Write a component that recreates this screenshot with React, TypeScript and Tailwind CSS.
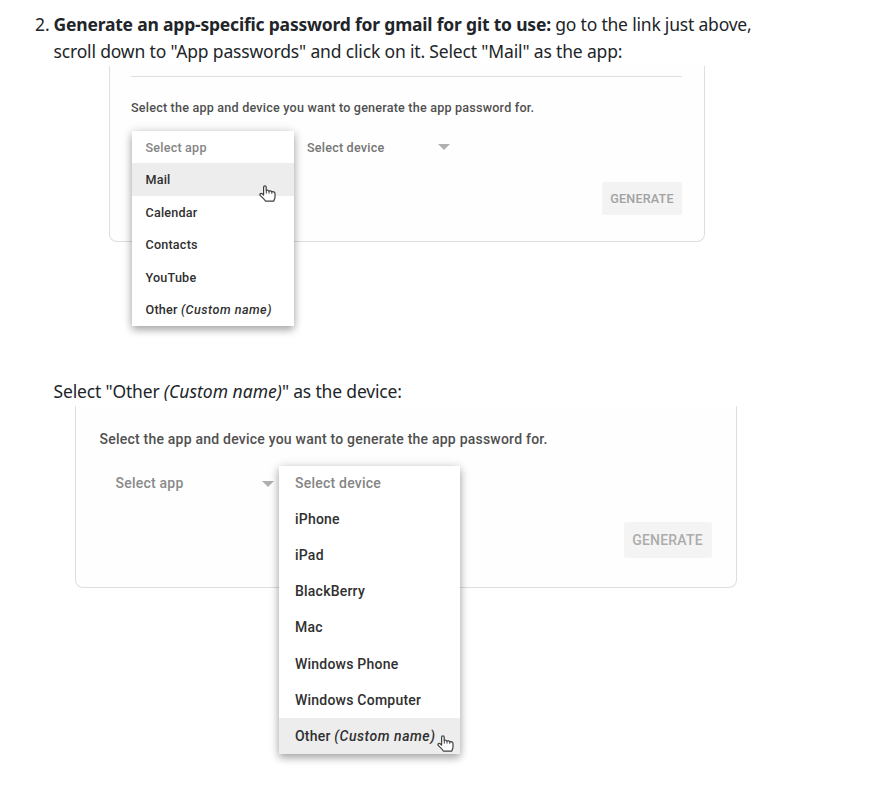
import type { ReactNode } from "react";

function Hand({ className }: { className: string }) {
  return (
    <svg viewBox="0 0 17 17" className={`absolute h-[17px] w-[17px] ${className}`}>
      <path
        d="M4.6 10V2.2C4.6 .4 7.2 .4 7.2 2.2V5.6C8 4.9 9.6 5.1 10 6.2C10.8 5.5 12.4 5.8 12.8 6.9C14 6.3 16 6.8 16 8.6V12C16 13.6 15.2 14.4 14.8 16.2H6.4C6 14.4 3.4 12.8 1.2 10.4C.3 9 1.8 7.8 3.2 8.8Z"
        fill="#fff"
        stroke="#404040"
        strokeWidth="1.2"
        strokeLinejoin="round"
      />
      <path d="M7.3 5.6V8.6M10 6.2V8.6M12.8 6.9V8.8" stroke="#404040" strokeWidth="1" fill="none" />
    </svg>
  );
}

function Arrow() {
  return (
    <svg viewBox="0 0 12 6" className="h-[6px] w-[12px] shrink-0">
      <path d="M0 0H12L6 6Z" fill="#b0b0b0" />
    </svg>
  );
}

function Other({ className }: { className: string }) {
  return (
    <>
      Other <em className={className}>(Custom name)</em>
    </>
  );
}

function Menu({
  title,
  items,
  active,
  className,
  rowClass,
}: {
  title: string;
  items: ReactNode[];
  active: number;
  className: string;
  rowClass: string;
}) {
  return (
    <ul className={`absolute bg-white font-medium text-[#303030] shadow-[0_4px_8px_rgba(0,0,0,0.3),0_0_10px_rgba(0,0,0,0.12)] ${className}`}>
      <li className={`flex items-center whitespace-pre text-[#858585] ${rowClass}`}>{title}</li>
      {items.map((item, i) => (
        <li key={i} className={`flex items-center whitespace-pre ${rowClass} ${i === active ? "bg-[#ededed]" : ""}`}>
          <span>{item}</span>
        </li>
      ))}
    </ul>
  );
}

export default function App() {
  return (
    <main className="h-[785px] w-[891px] overflow-hidden bg-white pt-[11px] font-['Noto_Sans',sans-serif] text-[17.5px] leading-[27px] text-[#212529]">
      <div className="flex">
        <span className="w-[53.5px] shrink-0 pl-[35px]">2.</span>
        <div className="whitespace-nowrap">
          <p className="tracking-[-0.2px]">
            <b>Generate an app-specific password for gmail for git to use:</b> go to the link just above,
          </p>
          <p className="tracking-[-0.163px]">scroll down to "App passwords" and click on it. Select "Mail" as the app:</p>
        </div>
      </div>

      <section className="relative ml-[109px] mt-px h-[176px] w-[596px] rounded-b-[8px] border border-t-0 border-[#dedede] bg-[#fefefe] px-[21px] pt-[10px] font-[Roboto,sans-serif] text-[12.6px] tracking-[0.2px]">
        <div className="h-px w-[551px] bg-[#dedede]" />
        <p className="mt-[17px] font-medium text-[#505050]">Select the app and device you want to generate the app password for.</p>
        <div className="ml-[176px] mt-[12.5px] flex w-[143px] items-center justify-between font-medium text-[#757575]">
          <span>Select device</span>
          <Arrow />
        </div>
        <button className="ml-[471px] mt-[21.5px] flex h-[33px] w-[80px] items-center justify-center rounded-[2px] bg-[#f3f3f3] font-medium text-[#a2a2a2]">GENERATE</button>
        <Menu
          title="Select app"
          active={0}
          items={["Mail", "Calendar", "Contacts", "YouTube", <Other className="tracking-[0.48px]" />]}
          className="left-[21.5px] top-[64.8px] w-[162.4px]"
          rowClass="h-[32.5px] pl-[14px]"
        />
        <Hand className="left-[149px] top-[119px]" />
      </section>

      <p className="ml-[53.5px] mt-[136px] tracking-[-0.17px]">
        Select "Other <em className="tracking-[0.02px]">(Custom name)</em>" as the device:
      </p>

      <section className="relative ml-[75px] mt-px h-[182px] w-[662px] rounded-b-[8px] border border-t-0 border-[#dedede] bg-[#fefefe] px-[23.5px] pt-[20px] font-[Roboto,sans-serif] text-[14px] tracking-[0.22px]">
        <p className="font-medium text-[#505050]">Select the app and device you want to generate the app password for.</p>
        <div className="ml-[16px] mt-[17px] flex w-[158px] items-center justify-between font-medium text-[#8a8a8a]">
          <span>Select app</span>
          <Arrow />
        </div>
        <button className="ml-[524px] mt-[25px] flex h-[36px] w-[88px] items-center justify-center rounded-[3px] bg-[#f4f4f4] font-medium text-[#acacac]">GENERATE</button>
        <Menu
          title="Select device"
          active={6}
          items={["iPhone", "iPad", "BlackBerry", "Mac", "Windows Phone", "Windows Computer", <Other className="tracking-[0.53px]" />]}
          className="left-[202.5px] top-[59.5px] w-[181.4px]"
          rowClass="h-[36.1px] pl-[16.5px]"
        />
        <Hand className="left-[361px] top-[329px]" />
      </section>
    </main>
  );
}
